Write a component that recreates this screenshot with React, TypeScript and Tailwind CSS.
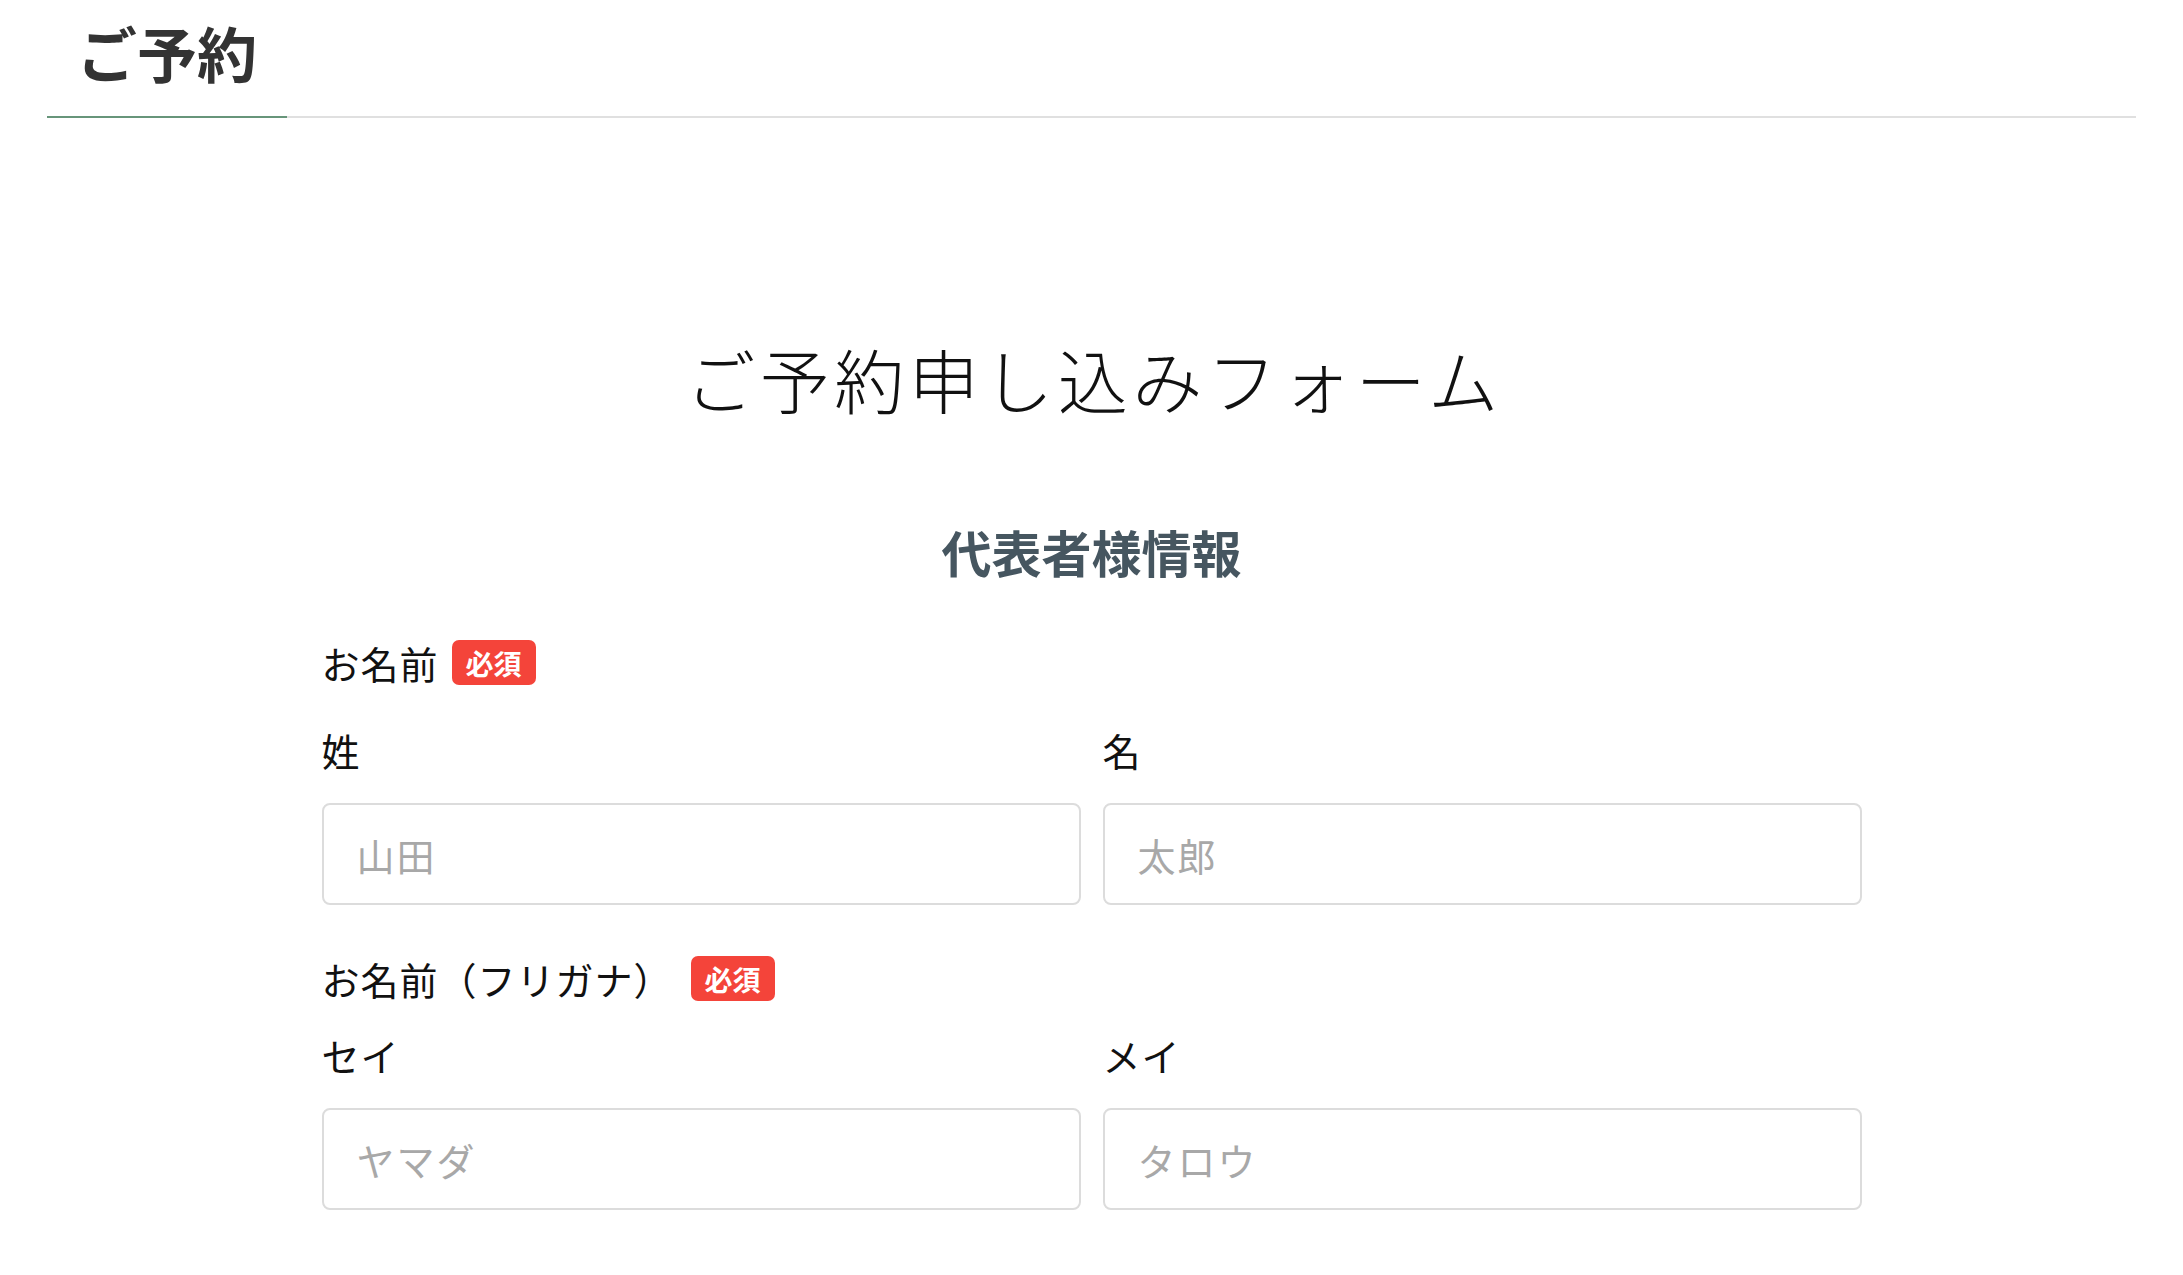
import React from "react";

const jp = { fontFamily: '"Noto Sans CJK JP", "Noto Sans", sans-serif' };

function Badge({ className = "" }: { className?: string }) {
  return (
    <span
      className={`inline-flex h-[45px] w-[84px] items-center justify-center rounded-[7px] bg-[#f4443a] text-[28px] font-bold leading-none text-white ${className}`}
    >
      必須
    </span>
  );
}

function Field({ label, placeholder, mt }: { label: string; placeholder: string; mt: string }) {
  return (
    <div className="flex flex-col">
      <div className={`text-[38px] leading-none tracking-[1px] text-[#111] ${mt}`}>{label}</div>
      <input
        className="mt-[34px] h-[102px] w-full rounded-[8px] border-2 border-[#dcdcdc] bg-white pl-[33px] text-[38px] tracking-[2px] text-[#222] outline-none placeholder:text-[#a8a8a8]"
        placeholder={placeholder}
        style={jp}
      />
    </div>
  );
}

export default function App() {
  return (
    <div className="min-h-[1275px] w-full bg-white" style={jp}>
      <div className="mx-[47px] flex border-b-2 border-[#e0e0e0]">
        <div className="-mb-[2px] flex w-[240px] justify-center border-b-2 border-[#67957a] pb-[34px] pt-[22px]">
          <h1 className="text-[60px] font-bold leading-none text-[#333]">ご予約</h1>
        </div>
      </div>

      <h2 className="mt-[226px] pl-[5px] text-center text-[70px] font-light leading-none tracking-[4.5px] text-[#111]">
        ご予約申し込みフォーム
      </h2>

      <h3 className="mt-[112px] text-center text-[50px] font-bold leading-none text-[#465660]">
        代表者様情報
      </h3>

      <div className="mx-auto w-[1540px]">
        <div className="mt-[64px] flex items-center">
          <span className="text-[38px] leading-none tracking-[1px] text-[#111]">お名前</span>
          <Badge className="ml-[13px]" />
        </div>
        <div className="grid grid-cols-2 gap-x-[22px]">
          <Field label="姓" placeholder="山田" mt="mt-[46px]" />
          <Field label="名" placeholder="太郎" mt="mt-[46px]" />
        </div>

        <div className="mt-[51px] flex items-center">
          <span className="text-[38px] leading-none tracking-[1px] text-[#111]">お名前（フリガナ）</span>
          <Badge className="ml-[18px]" />
        </div>
        <div className="grid grid-cols-2 gap-x-[22px]">
          <Field label="セイ" placeholder="ヤマダ" mt="mt-[35px]" />
          <Field label="メイ" placeholder="タロウ" mt="mt-[35px]" />
        </div>
      </div>
    </div>
  );
}
